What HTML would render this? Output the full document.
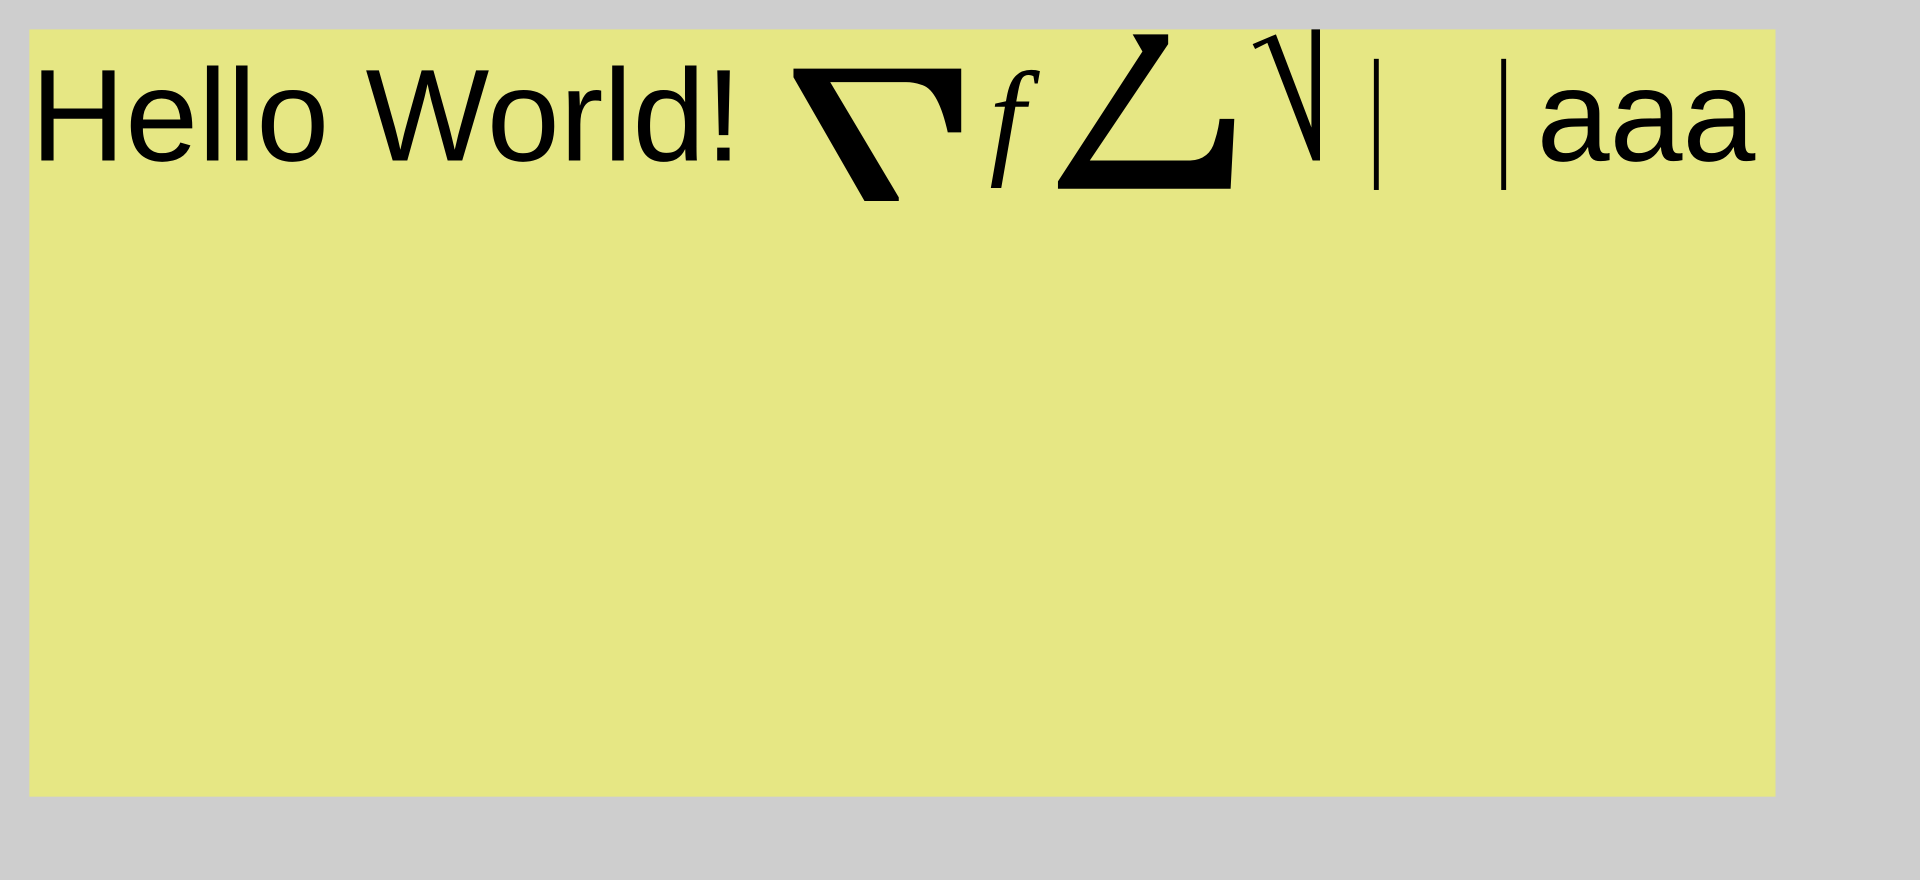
<!DOCTYPE html>
<html><head><style>html,body{margin:0;padding:0;background:#cecece;width:1920px;height:880px;overflow:hidden}</style></head>
<body>
<svg width="1920" height="880" viewBox="0 0 1568 718" preserveAspectRatio="none" xmlns="http://www.w3.org/2000/svg">
<rect x="0" y="0" width="1568" height="718" fill="#cecece"/>
<rect x="24" y="24" width="1426" height="626" fill="#e6e784"/>
<text x="25" y="131" font-family="Liberation Sans, Arial, sans-serif" font-size="107" fill="#000">Hello World!</text>
<path d="M648,56 L785,56 L785,108 L774,108 Q766,72 752,69 Q746,67 740,67 L678,67 L734,161 L734,164 L706,164 L648,63 Z" fill="#000"/>
<text x="808" y="131" font-family="Liberation Serif, serif" font-style="italic" font-size="105" fill="#000">f</text>
<path d="M925,28 L954,28 L954,36 L890,131 L972,131 Q988,130 992,115 Q995,106 996,97 L1008,97 L1005,154 L864,154 L864,148 L933,42 Z" fill="#000"/>
<path d="M1023,36 L1042,28 L1071,104 L1071,24 L1078,24 L1078,131 L1072,131 L1035,35 L1025,40 Z" fill="#000"/>
<rect x="1122" y="48" width="4" height="107" fill="#000"/>
<rect x="1226" y="48" width="4" height="107" fill="#000"/>
<text x="1255" y="131" font-family="Liberation Sans, Arial, sans-serif" font-size="107" fill="#000">aaa</text>
</svg>
</body></html>
